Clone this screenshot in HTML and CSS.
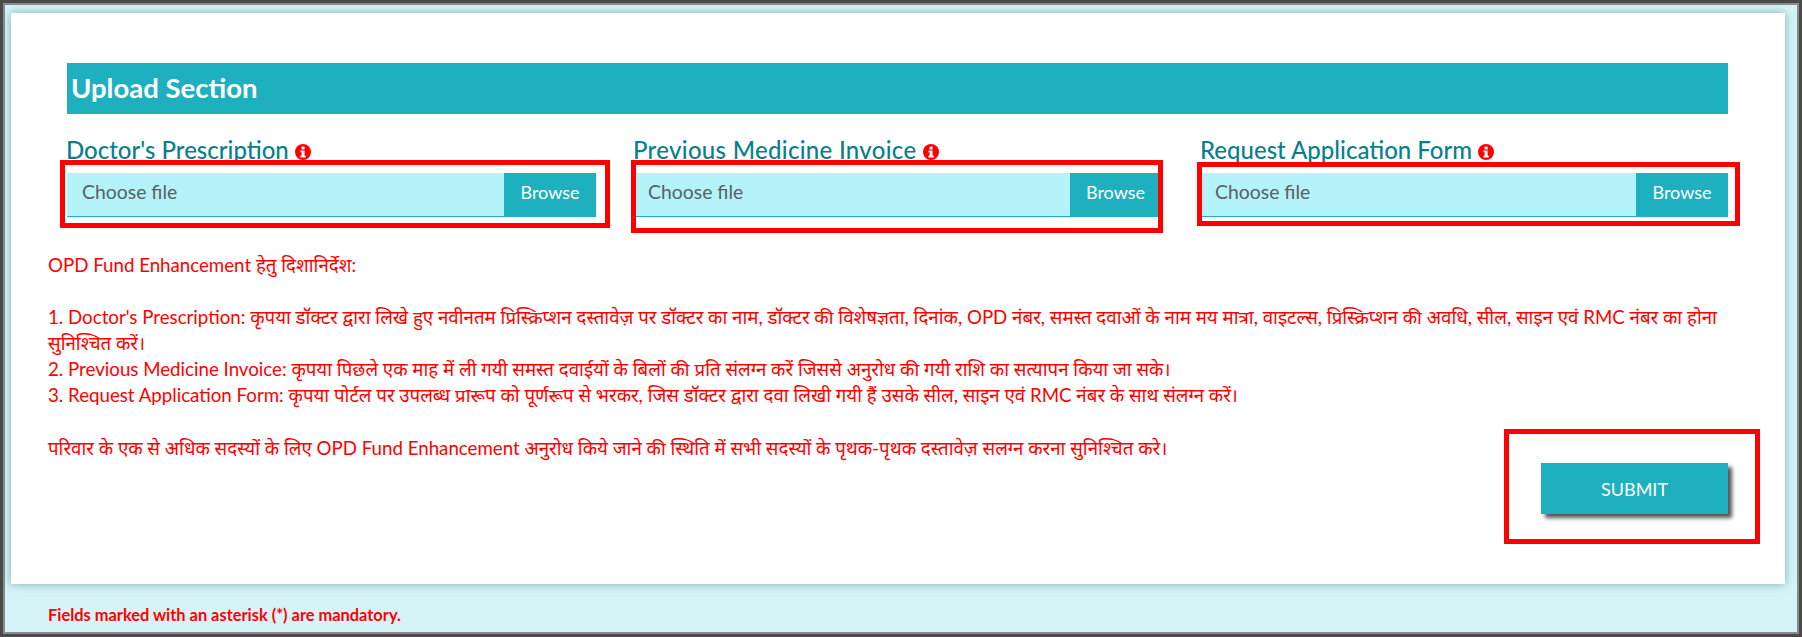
FILE: index.html
```html
<!DOCTYPE html>
<html lang="en">
<head>
    <meta charset="UTF-8">
    <meta name="viewport" content="width=device-width, initial-scale=1.0">
    <title>OPD Fund Enhancement</title>
    <link rel="stylesheet" href="styles.css">
</head>
<body>
    <div class="frame">
        <div class="panel">
            <h2 class="section-title">Upload Section</h2>

            <!-- Upload fields -->
            <div class="upload-row">
                <div class="upload-col upload-col-1">
                    <label class="upload-label">Doctor's Prescription <svg class="info-icon" viewBox="0 0 16 16"><circle cx="8" cy="8" r="8" fill="#f00"/><rect x="6.6" y="2.6" width="3" height="2.8" fill="#fff"/><path d="M5.4 6.6h4.2v5.2h1.2v1.7H5.4v-1.7h1.2V8.3H5.4z" fill="#fff"/></svg></label>
                    <div class="file-input">
                        <span class="file-text">Choose file</span>
                        <span class="file-btn">Browse</span>
                        <span class="mark"></span>
                    </div>
                </div>
                <div class="upload-col upload-col-2">
                    <label class="upload-label">Previous Medicine Invoice <svg class="info-icon" viewBox="0 0 16 16"><circle cx="8" cy="8" r="8" fill="#f00"/><rect x="6.6" y="2.6" width="3" height="2.8" fill="#fff"/><path d="M5.4 6.6h4.2v5.2h1.2v1.7H5.4v-1.7h1.2V8.3H5.4z" fill="#fff"/></svg></label>
                    <div class="file-input">
                        <span class="file-text">Choose file</span>
                        <span class="file-btn">Browse</span>
                        <span class="mark"></span>
                    </div>
                </div>
                <div class="upload-col upload-col-3">
                    <label class="upload-label">Request Application Form <svg class="info-icon" viewBox="0 0 16 16"><circle cx="8" cy="8" r="8" fill="#f00"/><rect x="6.6" y="2.6" width="3" height="2.8" fill="#fff"/><path d="M5.4 6.6h4.2v5.2h1.2v1.7H5.4v-1.7h1.2V8.3H5.4z" fill="#fff"/></svg></label>
                    <div class="file-input">
                        <span class="file-text">Choose file</span>
                        <span class="file-btn">Browse</span>
                        <span class="mark"></span>
                    </div>
                </div>
            </div>

            <!-- Guidelines -->
            <div class="notes">
                <p>OPD Fund Enhancement हेतु दिशानिर्देश:</p>
                <p class="notes-list">1. Doctor's Prescription: कृपया डॉक्टर द्वारा लिखे हुए नवीनतम प्रिस्क्रिप्शन दस्तावेज़ पर डॉक्टर का नाम, डॉक्टर की विशेषज्ञता, दिनांक, OPD नंबर, समस्त दवाओं के नाम मय मात्रा, वाइटल्स, प्रिस्क्रिप्शन की अवधि, सील, साइन एवं RMC नंबर का होना सुनिश्चित करें।<br>
                2. Previous Medicine Invoice: कृपया पिछले एक माह में ली गयी समस्त दवाईयों के बिलों की प्रति संलग्न करें जिससे अनुरोध की गयी राशि का सत्यापन किया जा सके।<br>
                3. Request Application Form: कृपया पोर्टल पर उपलब्ध प्रारूप को पूर्णरूप से भरकर, जिस डॉक्टर द्वारा दवा लिखी गयी हैं उसके सील, साइन एवं RMC नंबर के साथ संलग्न करें।</p>
                <p class="notes-last">परिवार के एक से अधिक सदस्यों के लिए OPD Fund Enhancement अनुरोध किये जाने की स्थिति में सभी सदस्यों के पृथक-पृथक दस्तावेज़ सलग्न करना सुनिश्चित करे।</p>
            </div>

            <div class="submit-row">
                <button class="submit-btn">SUBMIT<span class="mark"></span></button>
            </div>
        </div>

        <div class="footer-note">Fields marked with an asterisk (*) are mandatory.</div>
    </div>
</body>
</html>
```

FILE: styles.css
```css
* {
    margin: 0;
    padding: 0;
    box-sizing: border-box;
}

body {
    font-family: 'Lato', 'Noto Sans', sans-serif;
    background: #d6f4f7;
    overflow: hidden;
}

.frame {
    height: 637px;
    padding: 10px 14px 0 8px;
    border: 3px solid #4a4a4a;
    background: #d6f4f7;
    box-shadow: inset 0 0 0 2px #8a8a8a;
}

.panel {
    position: relative;
    height: 571px;
    padding: 50px 57px 0 56px;
    background: white;
    box-shadow: 0 0 9px rgba(60, 130, 140, 0.6);
}

.section-title {
    height: 51px;
    padding-left: 4px;
    background: #1fb0c0;
    color: white;
    font-size: 27.5px;
    font-weight: 700;
    line-height: 49px;
}

.upload-row {
    display: flex;
    margin-top: 26px;
}

.upload-col-1 {
    width: 529px;
    margin-right: 40px;
}

.upload-col-2 {
    width: 522px;
    margin-right: 44px;
}

.upload-col-3 {
    width: 526px;
}

.upload-label {
    display: block;
    height: 33px;
    color: #0a7f8c;
    font-size: 24px;
    font-weight: 500;
    line-height: 20px;
    white-space: nowrap;
}

.upload-col-1 .upload-label {
    margin-left: -1px;
}

.upload-col-2 .upload-label {
    margin-left: -3px;
    letter-spacing: 0.3px;
}

.upload-col-3 .upload-label {
    margin-left: -2px;
}

.info-icon {
    width: 16px;
    height: 16px;
    vertical-align: -1px;
}

.file-input {
    position: relative;
    display: flex;
    height: 44px;
    background: #b3f3f9;
    border-bottom: 1px solid #1fb0c0;
}

.file-text {
    flex: 1;
    padding-left: 15px;
    color: #5a5f66;
    font-size: 19.4px;
    line-height: 38px;
}

.upload-col-2 .file-text {
    padding-left: 12px;
}

.upload-col-3 .file-text {
    padding-left: 13px;
}

.file-btn {
    width: 92px;
    margin-bottom: -1px;
    background: #1fb0c0;
    color: white;
    font-size: 18px;
    line-height: 39px;
    text-align: center;
}

.upload-col-2 .file-btn {
    width: 88px;
    padding-left: 3px;
}

/* red annotation boxes drawn over the controls */
.mark {
    position: absolute;
    border: 5px solid #f00;
    pointer-events: none;
}

.upload-col-1 .mark {
    top: -13px;
    left: -7px;
    right: -14px;
    bottom: -12px;
}

.upload-col-2 .mark {
    top: -13px;
    left: -5px;
    right: -5px;
    bottom: -17px;
}

.upload-col-3 .mark {
    top: -11px;
    left: -5px;
    right: -12px;
    bottom: -10px;
}

.notes {
    margin-top: 35px;
    margin-left: -19px;
    margin-right: -14px;
    color: #f00;
    font-size: 18.7px;
    line-height: 26px;
}

.notes-list {
    margin-top: 26px;
}

.notes-last {
    margin-top: 27px;
}

.submit-row {
    position: absolute;
    top: 450px;
    right: 57px;
}

.submit-btn {
    position: relative;
    display: block;
    width: 187px;
    height: 51px;
    border: none;
    background: #1fb0c0;
    color: white;
    font-family: inherit;
    font-size: 18px;
    box-shadow: 4px 4px 4px #555;
}

.submit-btn .mark {
    top: -34px;
    left: -37px;
    right: -32px;
    bottom: -30px;
}

.footer-note {
    margin-top: 21px;
    margin-left: 37px;
    color: #f00;
    font-size: 16.4px;
    font-weight: 700;
}
```
